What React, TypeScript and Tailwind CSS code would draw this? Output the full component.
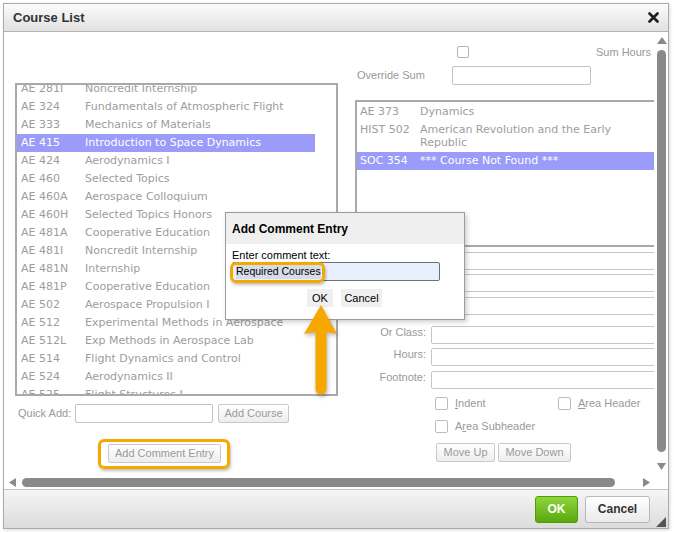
import React from "react";

const leftCourses: [string, string][] = [
  ["AE 281I", "Noncredit Internship"],
  ["AE 324", "Fundamentals of Atmospheric Flight"],
  ["AE 333", "Mechanics of Materials"],
  ["AE 415", "Introduction to Space Dynamics"],
  ["AE 424", "Aerodynamics I"],
  ["AE 460", "Selected Topics"],
  ["AE 460A", "Aerospace Colloquium"],
  ["AE 460H", "Selected Topics Honors"],
  ["AE 481A", "Cooperative Education"],
  ["AE 481I", "Noncredit Internship"],
  ["AE 481N", "Internship"],
  ["AE 481P", "Cooperative Education"],
  ["AE 502", "Aerospace Propulsion I"],
  ["AE 512", "Experimental Methods in Aerospace"],
  ["AE 512L", "Exp Methods in Aerospace Lab"],
  ["AE 514", "Flight Dynamics and Control"],
  ["AE 524", "Aerodynamics II"],
  ["AE 525", "Flight Structures I"],
];

const rightCourses: [string, string][] = [
  ["AE 373", "Dynamics"],
  ["HIST 502", "American Revolution and the Early Republic"],
  ["SOC 354", "*** Course Not Found ***"],
];

const Checkbox = () => (
  <span className="block shrink-0 w-[13px] h-[13px] border border-[#bcbcbc] rounded-[2px] bg-white" />
);

const GrayButton = ({ label, className }: { label: string; className: string }) => (
  <button
    className={`block shrink-0 h-[19px] border border-[#c9c9c9] rounded-[2px] bg-gradient-to-b from-white to-[#ededed] text-[11px] text-[#999] leading-none ${className}`}
  >
    {label}
  </button>
);

export default function App() {
  return (
    <div className="relative w-[674px] h-[533px] overflow-hidden bg-white font-['Liberation_Sans',Arial,sans-serif]">
      {/* Window */}
      <div className="ml-[3px] mt-[3px] w-[666px] h-[526px] border border-[#ababab] bg-white flex flex-col shadow-[1px_1px_3px_rgba(0,0,0,0.15)]">
        {/* Title bar */}
        <div className="h-[28px] shrink-0 border-b border-[#b3b3b3] bg-gradient-to-b from-[#fbfbfb] to-[#e1e1e1] flex items-center justify-between pl-[9px] pr-[9px]">
          <span className="text-[13px] font-bold text-[#333]">Course List</span>
          <svg width="11" height="11" viewBox="0 0 11 11">
            <path d="M1.5 1.5 L9.5 9.5 M9.5 1.5 L1.5 9.5" stroke="#1e1e1e" strokeWidth="2.6" strokeLinecap="round" />
          </svg>
        </div>

        {/* Body */}
        <div className="flex-1 flex flex-col min-h-0">
          <div className="flex-1 flex min-h-0">
            {/* Content */}
            <div className="w-[650px] overflow-hidden flex pl-[11px]">
              {/* Left column */}
              <div className="w-[323px] shrink-0 pt-[51px]">
                <div className="h-[313px] border-2 border-[#a9a9a9] overflow-hidden">
                  <div className="-mt-[5px] font-['DejaVu_Sans',Verdana,sans-serif] text-[11px]">
                    {leftCourses.map(([code, title]) => {
                      const sel = code === "AE 415";
                      return (
                        <div
                          key={code + title}
                          className={`flex w-[298px] h-[18px] items-center whitespace-nowrap ${sel ? "bg-[#9b9bf9] text-white" : "text-[#9d9d9d]"}`}
                        >
                          <span className="w-[68px] pl-[4px] shrink-0">{code}</span>
                          <span>{title}</span>
                        </div>
                      );
                    })}
                  </div>
                </div>

                {/* Quick add */}
                <div className="mt-[8px] flex items-center h-[19px]">
                  <span className="w-[60px] shrink-0 pl-[3px] text-[11px] text-[#999]">Quick Add:</span>
                  <span className="w-[138px] h-[19px] shrink-0 border border-[#c2c2c2] rounded-[2px] bg-white" />
                  <GrayButton label="Add Course" className="ml-[5px] w-[71px]" />
                </div>

                {/* Add comment entry */}
                <div className="mt-[21px] ml-[93px] relative w-[113px] h-[19px]">
                  <GrayButton label="Add Comment Entry" className="w-[113px]" />
                  <span className="absolute left-[-10px] right-[-9px] top-[-5px] bottom-[-6px] border-[3px] border-[#f6a700] rounded-[6px] shadow-[1px_2px_3px_rgba(0,0,0,0.25)]" />
                </div>
              </div>

              {/* Right column */}
              <div className="w-[299px] shrink-0 ml-[17px] pt-[14px] text-[11px] text-[#999]">
                <div className="flex items-center h-[12px]">
                  <span className="ml-[102px] block w-[12px] h-[12px] border border-[#b5b5b5] rounded-[2px] bg-white" />
                  <span className="ml-auto mr-[3px]">Sum Hours</span>
                </div>

                <div className="mt-[8px] flex items-center h-[19px]">
                  <span className="w-[97px] shrink-0 pl-[2px]">Override Sum</span>
                  <span className="w-[139px] h-[19px] shrink-0 border border-[#c2c2c2] rounded-[2px] bg-white" />
                </div>

                {/* Selected list */}
                <div className="mt-[15px] w-[300px] h-[147px] border-t-2 border-l-2 border-b-2 border-[#a9a9a9] overflow-hidden pt-[1px] font-['DejaVu_Sans',Verdana,sans-serif] text-[11px] leading-[13px]">
                  {rightCourses.map(([code, title]) => {
                    const sel = code === "SOC 354";
                    return (
                      <div
                        key={code}
                        className={`flex pt-[2px] pb-[3px] ${sel ? "bg-[#9b9bf9] text-white" : "text-[#9d9d9d]"}`}
                      >
                        <span className="w-[63px] pl-[3px] shrink-0 whitespace-nowrap">{code}</span>
                        <span className="flex-1">{title}</span>
                      </div>
                    );
                  })}
                </div>

                {/* Form rows */}
                {[
                  { label: "", mt: "mt-[5px]" },
                  { label: "", mt: "mt-[4px]" },
                  { label: "", mt: "mt-[5px]" },
                  { label: "Or Class:", mt: "mt-[11px]" },
                  { label: "Hours:", mt: "mt-[4px]" },
                  { label: "Footnote:", mt: "mt-[5px]" },
                ].map((row, i) => (
                  <div key={i} className={`flex items-start h-[18px] ${row.mt}`}>
                    <span className="w-[71px] shrink-0 text-right leading-[12px]">{row.label}</span>
                    <span className="ml-[5px] w-[240px] h-[18px] shrink-0 border border-[#c6c6c6] rounded-[2px] bg-white" />
                  </div>
                ))}

                <div className="mt-[8px] flex items-center h-[13px] pl-[80px]">
                  <div className="w-[123px] shrink-0 flex items-center">
                    <Checkbox />
                    <span className="ml-[7px]">
                      <span className="underline">I</span>ndent
                    </span>
                  </div>
                  <div className="flex items-center">
                    <Checkbox />
                    <span className="ml-[7px] whitespace-nowrap">
                      <span className="underline">A</span>rea Header
                    </span>
                  </div>
                </div>

                <div className="mt-[10px] flex items-center h-[13px] pl-[80px]">
                  <Checkbox />
                  <span className="ml-[7px]">
                    A<span className="underline">r</span>ea Subheader
                  </span>
                </div>

                <div className="mt-[10px] flex pl-[81px]">
                  <GrayButton label="Move Up" className="w-[59px]" />
                  <GrayButton label="Move Down" className="ml-[3px] w-[73px]" />
                </div>
              </div>
            </div>

            {/* Vertical scrollbar */}
            <div className="w-[14px] shrink-0 flex flex-col items-center bg-white">
              <svg width="10" height="7" viewBox="0 0 10 7" className="mt-[5px] ml-[1px]">
                <polygon points="5,0 10,7 0,7" fill="#8a8a8a" />
              </svg>
              <div className="mt-[6px] ml-[1px] w-[9px] h-[402px] rounded-full bg-[#8a8a8a]" />
              <svg width="9" height="7" viewBox="0 0 9 7" className="mt-[11px] ml-[1px]">
                <polygon points="0,0 9,0 4.5,7" fill="#8a8a8a" />
              </svg>
            </div>
          </div>

          {/* Horizontal scrollbar */}
          <div className="h-[13px] shrink-0 flex items-center">
            <svg width="7" height="9" viewBox="0 0 7 9" className="ml-[5px]">
              <polygon points="0,4.5 7,0 7,9" fill="#8a8a8a" />
            </svg>
            <div className="ml-[6px] w-[593px] h-[9px] rounded-full bg-[#8a8a8a]" />
            <svg width="7" height="9" viewBox="0 0 7 9" className="ml-[28px]">
              <polygon points="0,0 7,4.5 0,9" fill="#8a8a8a" />
            </svg>
          </div>
        </div>

        {/* Footer */}
        <div className="relative h-[39px] shrink-0 border-t border-[#c4c4c4] bg-gradient-to-b from-[#f5f5f5] to-[#dcdcdc] flex items-center justify-end pr-[18px] gap-[7px]">
          <button className="w-[43px] h-[27px] rounded-[3px] border border-[#4f9b0c] bg-gradient-to-b from-[#8ed63a] to-[#5aa80a] text-white text-[12px] font-bold">
            OK
          </button>
          <button className="w-[65px] h-[27px] rounded-[3px] border border-[#b8b8b8] bg-gradient-to-b from-white to-[#eaeaea] text-[#333] text-[12px] font-bold">
            Cancel
          </button>
          <svg width="10" height="10" viewBox="0 0 10 10" className="absolute right-[2px] bottom-[1px]">
            <polygon points="10,0 10,10 0,10" fill="#555" />
          </svg>
        </div>
      </div>

      {/* Add Comment Entry dialog */}
      <div className="absolute left-[225px] top-[212px] w-[240px] h-[108px] border border-[#9c9c9c] bg-white shadow-[2px_2px_5px_rgba(0,0,0,0.2)]">
        <div className="h-[31px] bg-[#efefef] flex items-center pl-[6px] text-[12px] font-bold text-black">
          Add Comment Entry
        </div>
        <div className="pl-[6px] pt-[5px] text-[11px] text-black">
          <div className="leading-[13px]">Enter comment text:</div>
          <div className="w-[208px] h-[19px] border border-[#707070] rounded-[2px] bg-[#e8f0fe] flex items-center pl-[3px]">
            <span className="bg-[#d6dde8] text-[10.5px]">Required Courses</span>
          </div>
          <div className="mt-[8px] flex">
            <button className="ml-[75px] w-[26px] h-[18px] bg-[#efefef] text-[11px] text-black">OK</button>
            <button className="ml-[8px] w-[41px] h-[18px] bg-[#efefef] text-[11px] text-black">Cancel</button>
          </div>
        </div>
      </div>

      {/* Highlight around comment text */}
      <span className="absolute left-[230px] top-[262px] w-[95px] h-[21px] border-[3px] border-[#f6a700] rounded-[6px] shadow-[1px_2px_3px_rgba(0,0,0,0.25)]" />

      {/* Arrow */}
      <svg
        width="42"
        height="100"
        viewBox="0 0 42 100"
        className="absolute left-[300px] top-[300px] drop-shadow-[1px_2px_2px_rgba(0,0,0,0.3)]"
      >
        <path
          d="M21 5 L37 34 L26.5 32 L26.5 89 A5.5 5.5 0 0 1 15.5 89 L15.5 32 L4 34 Z"
          fill="#f6a700"
        />
      </svg>
    </div>
  );
}
